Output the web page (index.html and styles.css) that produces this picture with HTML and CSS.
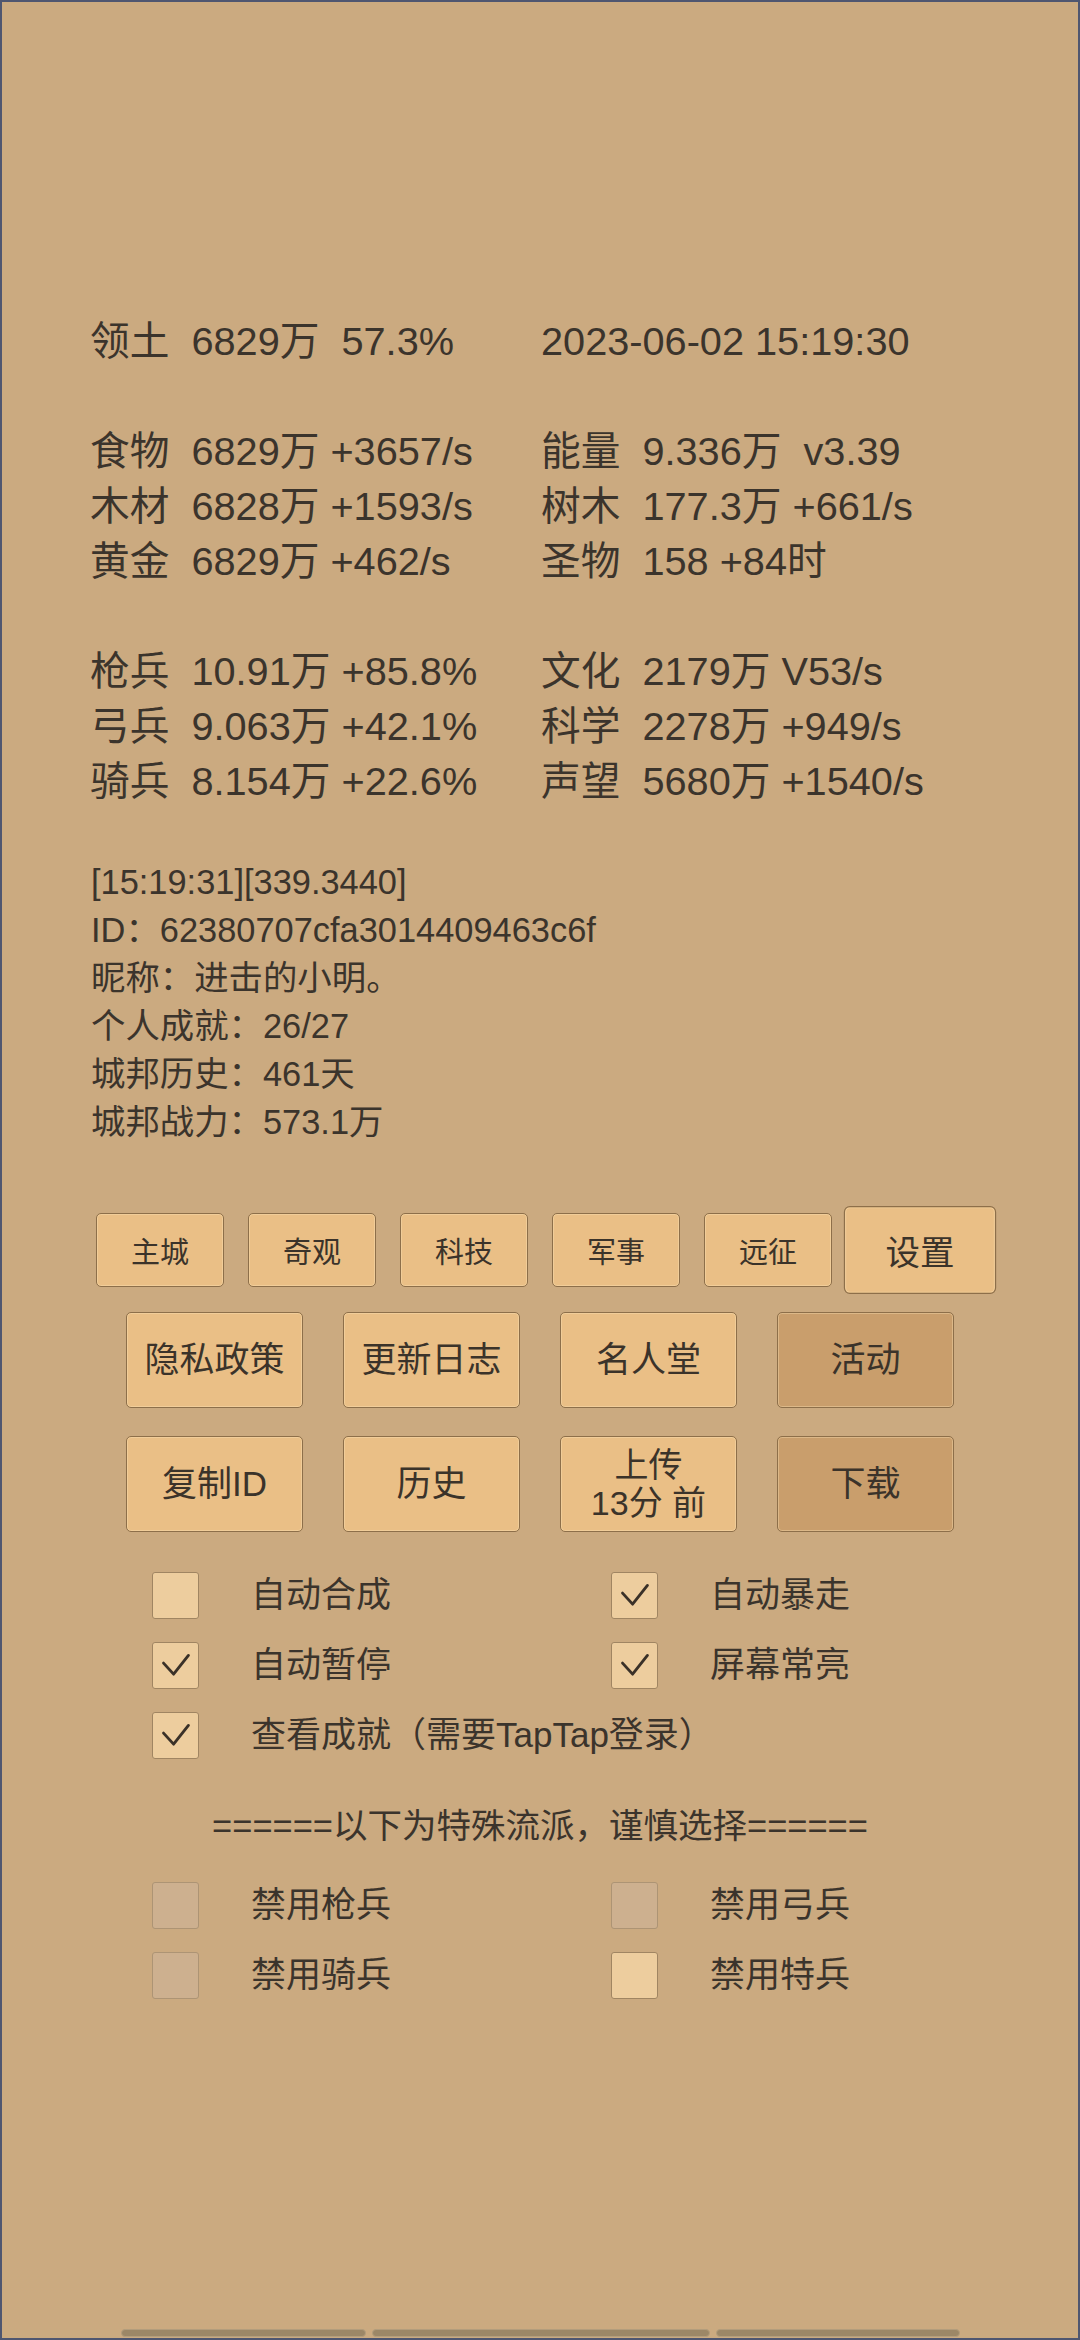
FILE: index.html
```html
<!DOCTYPE html>
<html lang="zh-CN">
<head>
<meta charset="utf-8">
<title>城邦</title>
<link rel="stylesheet" href="styles.css">
</head>
<body>
<div class="screen">
  <section class="stats">
    <div class="group">
      <div class="cell">领土  6829万  57.3%</div>
      <div class="cell">2023-06-02 15:19:30</div>
    </div>
    <div class="group">
      <div class="cell">食物  6829万 +3657/s</div>
      <div class="cell">能量  9.336万  v3.39</div>
      <div class="cell">木材  6828万 +1593/s</div>
      <div class="cell">树木  177.3万 +661/s</div>
      <div class="cell">黄金  6829万 +462/s</div>
      <div class="cell">圣物  158 +84时</div>
    </div>
    <div class="group">
      <div class="cell">枪兵  10.91万 +85.8%</div>
      <div class="cell">文化  2179万 V53/s</div>
      <div class="cell">弓兵  9.063万 +42.1%</div>
      <div class="cell">科学  2278万 +949/s</div>
      <div class="cell">骑兵  8.154万 +22.6%</div>
      <div class="cell">声望  5680万 +1540/s</div>
    </div>
  </section>

  <section class="info">
    <p>[15:19:31][339.3440]</p>
    <p>ID：62380707cfa3014409463c6f</p>
    <p>昵称：进击的小明。</p>
    <p>个人成就：26/27</p>
    <p>城邦历史：461天</p>
    <p>城邦战力：573.1万</p>
  </section>

  <nav class="tabs">
    <div class="btn tab">主城</div>
    <div class="btn tab">奇观</div>
    <div class="btn tab">科技</div>
    <div class="btn tab">军事</div>
    <div class="btn tab">远征</div>
    <div class="btn tab active">设置</div>
  </nav>

  <div class="actions">
    <div class="btn act">隐私政策</div>
    <div class="btn act">更新日志</div>
    <div class="btn act">名人堂</div>
    <div class="btn act dark">活动</div>
    <div class="btn act">复制ID</div>
    <div class="btn act">历史</div>
    <div class="btn act two">上传<br>13分 前</div>
    <div class="btn act dark">下载</div>
  </div>

  <div class="options">
    <div class="opt"><span class="box"></span><span class="label">自动合成</span></div>
    <div class="opt"><span class="box"><svg viewBox="0 0 47 47"><polyline points="11,21 21.5,32.5 37,13"/></svg></span><span class="label">自动暴走</span></div>
    <div class="opt"><span class="box"><svg viewBox="0 0 47 47"><polyline points="11,21 21.5,32.5 37,13"/></svg></span><span class="label">自动暂停</span></div>
    <div class="opt"><span class="box"><svg viewBox="0 0 47 47"><polyline points="11,21 21.5,32.5 37,13"/></svg></span><span class="label">屏幕常亮</span></div>
    <div class="opt wide"><span class="box"><svg viewBox="0 0 47 47"><polyline points="11,21 21.5,32.5 37,13"/></svg></span><span class="label">查看成就（需要TapTap登录）</span></div>
  </div>

  <p class="sep">======以下为特殊流派，谨慎选择======</p>

  <div class="options danger">
    <div class="opt"><span class="box off"></span><span class="label">禁用枪兵</span></div>
    <div class="opt"><span class="box off"></span><span class="label">禁用弓兵</span></div>
    <div class="opt"><span class="box off"></span><span class="label">禁用骑兵</span></div>
    <div class="opt"><span class="box"></span><span class="label">禁用特兵</span></div>
  </div>

  <div class="scrollbar">
    <span class="seg s1"></span>
    <span class="seg s2"></span>
    <span class="seg s3"></span>
  </div>
</div>
</body>
</html>
```

FILE: styles.css
```css
html, body {
  margin: 0;
  padding: 0;
  background: #cbaa80;
}

.screen {
  box-sizing: border-box;
  width: 1080px;
  height: 2340px;
  border: 2px solid #4f5670;
  background: #cbaa80;
  color: #3b342c;
  font-family: "Liberation Sans", "Noto Sans CJK SC", sans-serif;
  display: flex;
  flex-direction: column;
  overflow: hidden;
}

/* ---------- resource stats ---------- */
.stats {
  margin-top: 312px;
  padding-left: 88px;
  display: flex;
  flex-direction: column;
  gap: 55px;
}

.group {
  display: grid;
  grid-template-columns: 451px 451px;
  grid-auto-rows: 55px;
}

.cell {
  font-size: 39.7px;
  line-height: 55px;
  white-space: pre;
}

/* ---------- player info ---------- */
.info {
  margin-top: 49px;
  padding-left: 89px;
}

.info p {
  margin: 0;
  font-size: 34.4px;
  line-height: 48px;
  white-space: pre;
}

/* ---------- buttons ---------- */
.btn {
  box-sizing: border-box;
  display: flex;
  align-items: center;
  justify-content: center;
  text-align: center;
  background: #eabf86;
  border: 1.5px solid #8d6f4a;
  border-radius: 5px;
  box-shadow: inset 0 0 0 1px rgba(255, 232, 190, 0.35);
  color: #3b332a;
}

.tabs {
  margin-top: 67px;
  display: flex;
  justify-content: center;
  gap: 24px;
}

.tab {
  width: 128px;
  height: 74px;
  font-size: 29px;
}

.tab.active {
  transform: scale(1.19);
}

.actions {
  margin-top: 25px;
  display: grid;
  grid-template-columns: repeat(4, 177px);
  grid-auto-rows: 96px;
  column-gap: 40px;
  row-gap: 28px;
  justify-content: center;
}

.act {
  font-size: 35px;
  line-height: 40px;
}

.act.two {
  font-size: 34px;
  line-height: 38px;
}

.act.dark {
  background: #c99e6c;
}

/* ---------- checkboxes ---------- */
.options {
  margin-top: 28px;
  padding-left: 150px;
  display: grid;
  grid-template-columns: 459px 459px;
  grid-auto-rows: 70px;
}

.options.danger {
  margin-top: 20px;
}

.opt {
  display: flex;
  align-items: center;
}

.opt.wide {
  grid-column: 1 / span 2;
}

.box {
  box-sizing: border-box;
  width: 47px;
  height: 47px;
  flex: none;
  background: #edcd9e;
  border: 1px solid #a08562;
  border-radius: 3px;
  display: block;
}

.box.off {
  background: #cdb08f;
  border-color: #ad9474;
}

.box svg {
  display: block;
  width: 45px;
  height: 45px;
}

.box polyline {
  fill: none;
  stroke: #3a3128;
  stroke-width: 3;
  stroke-linecap: round;
  stroke-linejoin: round;
}

.label {
  margin-left: 52px;
  font-size: 35px;
  line-height: 48px;
  white-space: nowrap;
}

/* ---------- separator ---------- */
.sep {
  margin: 32px 0 0 0;
  font-size: 34.5px;
  line-height: 48px;
  text-align: center;
  white-space: pre;
}

/* ---------- bottom bar ---------- */
.scrollbar {
  margin-top: auto;
  margin-bottom: 1px;
  display: flex;
  justify-content: center;
  gap: 6px;
}

.seg {
  box-sizing: border-box;
  height: 8px;
  background: #9c8767;
  border: 1px solid #b39d7c;
  border-radius: 4px;
}

.s1 { width: 245px; }
.s2 { width: 338px; }
.s3 { width: 244px; }
```
